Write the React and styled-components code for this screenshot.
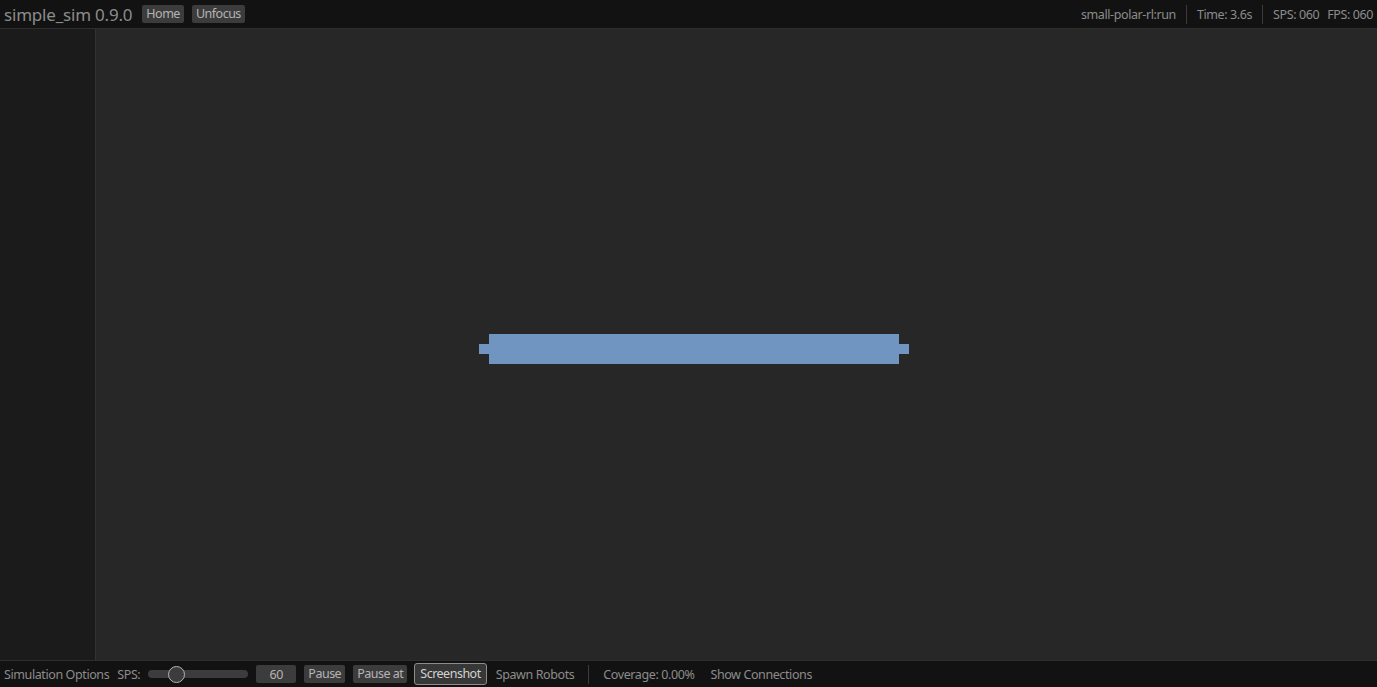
import React from "react";
import styled, { createGlobalStyle, css } from "styled-components";

const Global = createGlobalStyle`
  html, body { margin: 0; padding: 0; background: #1b1b1b; }
  body { font-family: "Noto Sans", "DejaVu Sans", sans-serif; overflow: hidden; }
  * { box-sizing: border-box; }
`;

const Shell = styled.div`
  display: flex;
  flex-direction: column;
  width: 100vw;
  height: 100vh;
  color: #8c8c8c;
  font-size: 12.5px;
  letter-spacing: -0.4px;
`;

const Bar = styled.div`
  display: flex;
  align-items: center;
  flex: 0 0 auto;
  background: #121212;
  padding: 0 4px;
  gap: 8px;
  ${(p) =>
    p.$top
      ? css`height: 29px; border-bottom: 1px solid #2e2e2e;`
      : css`height: 27px; border-top: 1px solid #2e2e2e;`}
`;

const Title = styled.span`
  font-size: 17px;
  color: #8c8c8c;
  letter-spacing: -0.2px;
  margin-right: 2px;
`;

const Button = styled.button`
  font: inherit;
  font-size: 12.5px;
  letter-spacing: -0.5px;
  color: ${(p) => (p.$active ? "#d2d2d2" : "#b4b4b4")};
  background: ${(p) => (p.$active ? "#373737" : "#3c3c3c")};
  border: 1px solid ${(p) => (p.$active ? "#8c8c8c" : "transparent")};
  border-radius: ${(p) => (p.$active ? "3px" : "2px")};
  height: ${(p) => (p.$active ? "22px" : "18px")};
  padding: 0 ${(p) => (p.$active ? "5px" : "3px")};
  margin: 0 ${(p) => (p.$active ? "-1px" : "0")};
  line-height: 1;
  display: inline-flex;
  align-items: center;
`;

const Plain = styled.span`
  color: #8c8c8c;
  white-space: nowrap;
`;

const Spacer = styled.div`
  flex: 1;
`;

const Sep = styled.div`
  width: 1px;
  height: 19px;
  background: #3c3c3c;
  margin: 0 ${(p) => p.$m || 2}px;
`;

const Body = styled.div`
  flex: 1;
  display: flex;
  min-height: 0;
`;

const SidePanel = styled.div`
  width: 96px;
  background: #1b1b1b;
  border-right: 1px solid #333;
`;

const Canvas = styled.div`
  flex: 1;
  position: relative;
  background: #272727;
`;

const Robot = styled.svg`
  position: absolute;
  left: 383px;
  top: 305px;
`;

const SliderWrap = styled.div`
  position: relative;
  width: 100px;
  height: 16px;
  display: flex;
  align-items: center;
`;

const Track = styled.div`
  width: 100%;
  height: 8px;
  border-radius: 4px;
  background: #3c3c3c;
`;

const Knob = styled.div`
  position: absolute;
  top: 0;
  width: 17px;
  height: 17px;
  border-radius: 50%;
  background: #3c3c3c;
  border: 1.5px solid #b4b4b4;
`;

const DragValue = styled.div`
  width: 40px;
  height: 18px;
  background: #3c3c3c;
  border-radius: 2px;
  color: #b4b4b4;
  display: flex;
  align-items: center;
  justify-content: center;
`;

export default function App() {
  return (
    <>
      <Global />
      <Shell>
        <Bar $top>
          <Title>simple_sim 0.9.0</Title>
          <Button>Home</Button>
          <Button>Unfocus</Button>
          <Spacer />
          <Plain>small-polar-rl:run</Plain>
          <Sep $m={2} />
          <Plain>Time: 3.6s</Plain>
          <Sep $m={2} />
          <Plain>SPS: 060</Plain>
          <Plain>FPS: 060</Plain>
        </Bar>
        <Body>
          <SidePanel />
          <Canvas>
            <Robot width="430" height="30" viewBox="0 0 430 30">
              <rect x="10" y="0" width="410" height="30" fill="#6f95c0" />
              <rect x="0" y="10" width="430" height="10" fill="#6f95c0" />
            </Robot>
          </Canvas>
        </Body>
        <Bar>
          <Plain>Simulation Options</Plain>
          <Plain>SPS:</Plain>
          <SliderWrap>
            <Track />
            <Knob style={{ left: "20px" }} />
          </SliderWrap>
          <DragValue>60</DragValue>
          <Button>Pause</Button>
          <Button>Pause at</Button>
          <Button $active>Screenshot</Button>
          <Plain style={{ marginLeft: 2 }}>Spawn Robots</Plain>
          <Sep $m={6} />
          <Plain>Coverage: 0.00%</Plain>
          <Plain style={{ marginLeft: 8 }}>Show Connections</Plain>
        </Bar>
      </Shell>
    </>
  );
}
